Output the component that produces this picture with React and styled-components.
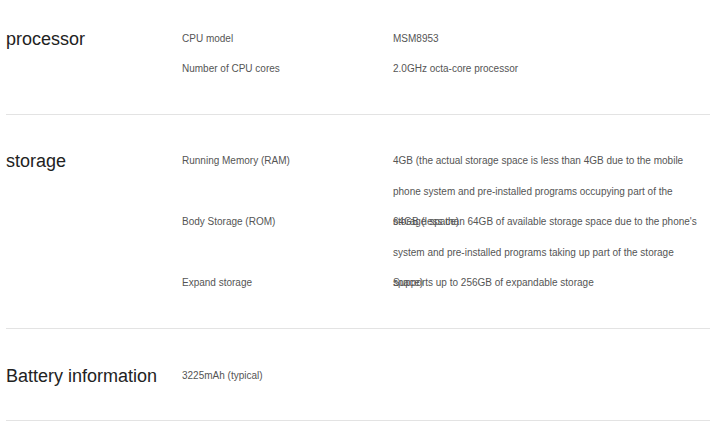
import React from "react";
import styled, { createGlobalStyle } from "styled-components";

const Global = createGlobalStyle`
  html, body { margin: 0; padding: 0; background: #ffffff; }
  body { font-family: "Liberation Sans", Arial, sans-serif; }
`;

const Page = styled.div`
  width: 720px;
  padding: 0 10px 0 6px;
  box-sizing: border-box;
`;

const Section = styled.section`
  display: flex;
  align-items: flex-start;
  padding: ${(p) => p.$top ?? 31}px 0 ${(p) => p.$bottom ?? 31}px;
  border-bottom: 1px solid #e3e3e3;
`;

const Title = styled.h2`
  width: 176px;
  flex: none;
  margin: 0;
  padding-top: 1px;
  font-size: 18px;
  font-weight: 400;
  line-height: 31px;
  color: #222;
`;

const Rows = styled.div`
  flex: 1;
  display: flex;
  flex-direction: column;
`;

const Row = styled.div`
  display: flex;
  box-sizing: border-box;
  height: ${(p) => p.$h}px;
  padding-top: 1px;
  font-size: 10px;
  line-height: 30.5px;
  color: #555;
`;

const Label = styled.div`
  width: 211px;
  flex: none;
`;

const Value = styled.div`
  width: 310px;
  flex: none;
  color: #555;
`;

const Plain = styled.div`
  padding-top: 1px;
  font-size: 10px;
  line-height: 30px;
  color: #555;
`;

export default function App() {
  return (
    <Page>
      <Global />
      <Section $top={23}>
        <Title>processor</Title>
        <Rows>
          <Row $h={30}>
            <Label>CPU model</Label>
            <Value>MSM8953</Value>
          </Row>
          <Row $h={30}>
            <Label>Number of CPU cores</Label>
            <Value>2.0GHz octa-core processor</Value>
          </Row>
        </Rows>
      </Section>
      <Section $top={30} $bottom={0}>
        <Title>storage</Title>
        <Rows>
          <Row $h={61}>
            <Label>Running Memory (RAM)</Label>
            <Value>
              4GB (the actual storage space is less than 4GB due to the mobile phone system and
              pre-installed programs occupying part of the storage space)
            </Value>
          </Row>
          <Row $h={61}>
            <Label>Body Storage (ROM)</Label>
            <Value>
              64GB (less than 64GB of available storage space due to the phone's system and
              pre-installed programs taking up part of the storage space)
            </Value>
          </Row>
          <Row $h={61}>
            <Label>Expand storage</Label>
            <Value>Supports up to 256GB of expandable storage</Value>
          </Row>
        </Rows>
      </Section>
      <Section $top={31} $bottom={28}>
        <Title>Battery information</Title>
        <Plain>3225mAh (typical)</Plain>
      </Section>
    </Page>
  );
}
